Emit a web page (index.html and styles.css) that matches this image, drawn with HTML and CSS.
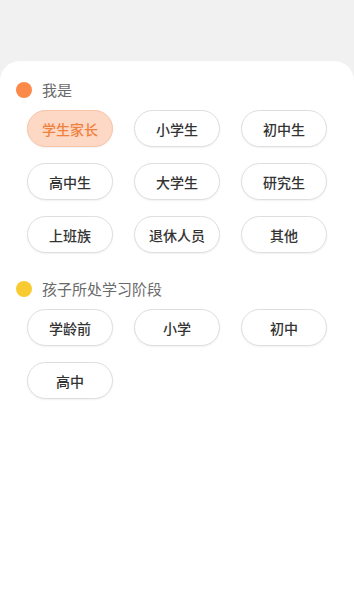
FILE: index.html
```html
<!DOCTYPE html>
<html lang="zh">
<head>
<meta charset="utf-8">
<link rel="stylesheet" href="styles.css">
</head>
<body>
<div class="page">
  <div class="card">
    <section class="section">
      <div class="heading"><span class="dot dot-orange"></span><span class="title">我是</span></div>
      <div class="chips">
        <div class="chip selected">学生家长</div>
        <div class="chip">小学生</div>
        <div class="chip">初中生</div>
        <div class="chip">高中生</div>
        <div class="chip">大学生</div>
        <div class="chip">研究生</div>
        <div class="chip">上班族</div>
        <div class="chip">退休人员</div>
        <div class="chip">其他</div>
      </div>
    </section>
    <section class="section second">
      <div class="heading"><span class="dot dot-yellow"></span><span class="title">孩子所处学习阶段</span></div>
      <div class="chips">
        <div class="chip">学龄前</div>
        <div class="chip">小学</div>
        <div class="chip">初中</div>
        <div class="chip">高中</div>
      </div>
    </section>
  </div>
</div>
</body>
</html>
```
FILE: styles.css
```css
html, body {
  margin: 0;
  padding: 0;
  height: 100%;
}
body {
  background: #f1f1f1;
  font-family: "Noto Sans CJK SC", "Noto Sans", sans-serif;
}
.page {
  height: 100%;
  display: flex;
  flex-direction: column;
}
.card {
  margin-top: 61px;
  flex: 1;
  background: #ffffff;
  border-radius: 20px 20px 0 0;
  padding: 18px 0 0 0;
}
.section.second {
  margin-top: 25px;
}
.heading {
  display: flex;
  align-items: center;
  height: 22px;
  padding-left: 16px;
}
.dot {
  width: 16px;
  height: 16px;
  border-radius: 50%;
  margin-right: 10px;
}
.dot-orange { background: #fb8a4a; }
.dot-yellow { background: #f9cb32; }
.title {
  font-size: 15px;
  color: #6a6a6a;
  line-height: 22px;
}
.chips {
  display: grid;
  grid-template-columns: repeat(3, 86px);
  column-gap: 21px;
  row-gap: 16px;
  padding-left: 27px;
  margin-top: 9px;
}
.chip {
  box-sizing: border-box;
  height: 37px;
  border: 1.5px solid #dedede;
  border-radius: 19px;
  display: flex;
  align-items: center;
  justify-content: center;
  font-size: 14px;
  font-weight: 500;
  color: #333333;
  background: #ffffff;
  box-shadow: 0 1px 2px rgba(0, 0, 0, 0.06);
}
.chip.selected {
  background: #fdd8c4;
  border-color: #f9c4a6;
  color: #f0803e;
}
```
